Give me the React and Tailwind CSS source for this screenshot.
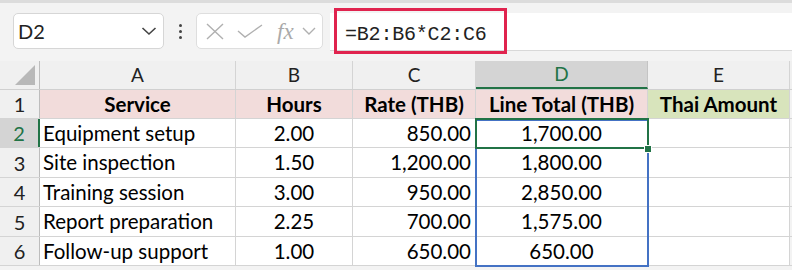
import { ChevronDown } from "lucide-react";

const cols = [
    { key: "A", w: "w-[196px]" },
    { key: "B", w: "w-[117px]" },
    { key: "C", w: "w-[123px]" },
    { key: "D", w: "w-[172px]" },
    { key: "E", w: "w-[142px]" },
];

const rows = [
    ["Equipment setup", "2.00", "850.00", "1,700.00"],
    ["Site inspection", "1.50", "1,200.00", "1,800.00"],
    ["Training session", "3.00", "950.00", "2,850.00"],
    ["Report preparation", "2.25", "700.00", "1,575.00"],
    ["Follow-up support", "1.00", "650.00", "650.00"],
];

const rowHeights = ["h-[29px]", "h-[30px]", "h-[29px]", "h-[30px]", "h-[29px]"];

function Toolbar() {
    return (
        <div className="h-[61px] bg-[#f3f3f3] border-t-[3px] border-[#dcdcdc] flex items-start pt-[10px]">
            <div className="ml-[13px] w-[151px] h-[36px] bg-white border border-[#d6d6d6] rounded-[5px] flex items-center justify-between pl-[4px] pr-[6px]">
                <span className="text-[20px] text-[#222]">D2</span>
                <svg width="16" height="10" viewBox="0 0 16 10" fill="none" stroke="#444" strokeWidth="1.6">
                    <path d="M1.5 2 L8 8 L14.5 2" />
                </svg>
            </div>
            <div className="w-[32px] h-[36px] flex flex-col items-center justify-center gap-[3px]">
                <span className="w-[3px] h-[3px] rounded-full bg-[#444]"></span>
                <span className="w-[3px] h-[3px] rounded-full bg-[#444]"></span>
                <span className="w-[3px] h-[3px] rounded-full bg-[#444]"></span>
            </div>
            <div className="w-[127px] h-[36px] bg-white border border-[#dedede] rounded-[5px] flex items-center pl-[9px] text-[#b4b4b4]">
                <svg width="18" height="17" viewBox="0 0 18 17" fill="none" stroke="#b0b0b0" strokeWidth="1.4">
                    <path d="M1 1 L17 16 M17 1 L1 16" />
                </svg>
                <svg width="26" height="14" viewBox="0 0 26 14" fill="none" stroke="#b0b0b0" strokeWidth="1.4" className="ml-[13px]">
                    <path d="M1 7 L8 13 L25 1" />
                </svg>
                <span className="ml-[14px] text-[23px] italic font-['Liberation_Serif',serif] leading-none text-[#aaa]">fx</span>
                <svg width="14" height="8" viewBox="0 0 14 8" fill="none" stroke="#b0b0b0" strokeWidth="1.4" className="ml-[8px]">
                    <path d="M1 1 L7 7 L13 1" />
                </svg>
            </div>
            <div className="ml-[7px] flex-1 h-[38px] bg-white border-b border-[#d8d8d8] relative">
                <div className="absolute left-[4px] top-[-5px] w-[173px] h-[46px] border-[3px] border-[#e0234e]"></div>
                <div className="pl-[15px] pt-[7px] text-[20px] text-[#222] font-['Liberation_Mono',monospace] tracking-[-0.2px]">=B2:B6*C2:C6</div>
            </div>
        </div>
    );
}

function ColumnHeader() {
    return (
        <div className="flex h-[29px] bg-[#f0f0f0] border-b border-[#d0d0d0]">
            <div className="w-[40px] border-r border-[#bdbdbd] relative">
                <div className="absolute right-[4px] bottom-[4px] w-0 h-0 border-l-[20px] border-l-transparent border-b-[20px] border-b-[#b8b8b8]"></div>
            </div>
            {cols.map((c) =>
                c.key === "D" ? (
                    <div key={c.key} className={`${c.w} bg-[#d4d4d4] border-r border-[#c4c4c4] border-b-2 border-b-[#217346] flex items-center justify-center text-[19px] text-[#217346]`}>
                        {c.key}
                    </div>
                ) : (
                    <div key={c.key} className={`${c.w} border-r border-[#d4d4d4] flex items-center justify-center text-[19px] text-[#222]`}>
                        {c.key}
                    </div>
                )
            )}
        </div>
    );
}

export default function App() {
    return (
        <div className="w-[792px] h-[270px] overflow-hidden bg-[#f3f3f3] font-['Lato','Liberation_Sans',sans-serif] text-[20.5px] text-black">
            <Toolbar />
            <ColumnHeader />
            <div className="relative">
                <div className="flex h-[29px] border-b border-[#d4d4d4]">
                    <div className="w-[40px] bg-[#f0f0f0] border-r border-[#bdbdbd] flex items-center justify-center text-[20px] text-[#222]">1</div>
                    <div className="w-[196px] bg-[#f2dcdb] border-r border-[#d4d4d4] flex items-center justify-center font-bold">Service</div>
                    <div className="w-[117px] bg-[#f2dcdb] border-r border-[#d4d4d4] flex items-center justify-center font-bold">Hours</div>
                    <div className="w-[123px] bg-[#f2dcdb] border-r border-[#d4d4d4] flex items-center justify-center font-bold">Rate (THB)</div>
                    <div className="w-[172px] bg-[#f2dcdb] border-r border-[#d4d4d4] flex items-center justify-center font-bold">Line Total (THB)</div>
                    <div className="w-[142px] bg-[#d8e4bc] border-r border-[#d4d4d4] flex items-center justify-center font-bold">Thai Amount</div>
                </div>
                {rows.map((r, i) => (
                    <div key={i} className={`flex ${rowHeights[i]} border-b border-[#d4d4d4]`}>
                        {i === 0 ? (
                            <div className="w-[40px] bg-[#d4d4d4] border-r-2 border-[#217346] flex items-center justify-center text-[20px] text-[#217346]">{i + 2}</div>
                        ) : (
                            <div className="w-[40px] bg-[#f0f0f0] border-r border-[#bdbdbd] flex items-center justify-center text-[20px] text-[#222]">{i + 2}</div>
                        )}
                        <div className="w-[196px] bg-white border-r border-[#d4d4d4] flex items-center pl-[3px]">{r[0]}</div>
                        <div className="w-[117px] bg-white border-r border-[#d4d4d4] flex items-center justify-center">{r[1]}</div>
                        <div className="w-[123px] bg-white border-r border-[#d4d4d4] flex items-center justify-end pr-[4px]">{r[2]}</div>
                        <div className="w-[172px] bg-white border-r border-[#d4d4d4] flex items-center justify-center">{r[3]}</div>
                        <div className="w-[142px] bg-white border-r border-[#d4d4d4]"></div>
                    </div>
                ))}
                {/* formula range highlight D2:D6 */}
                <div className="absolute left-[475px] top-[29px] w-[174px] h-[148px] border-2 border-[#4472c4] pointer-events-none"></div>
                {/* active cell D2 */}
                <div className="absolute left-[475px] top-[28px] w-[174px] h-[31px] border-2 border-[#217346] pointer-events-none"></div>
                <div className="absolute left-[644px] top-[55px] w-[8px] h-[8px] bg-[#217346] border border-white"></div>
            </div>
        </div>
    );
}
